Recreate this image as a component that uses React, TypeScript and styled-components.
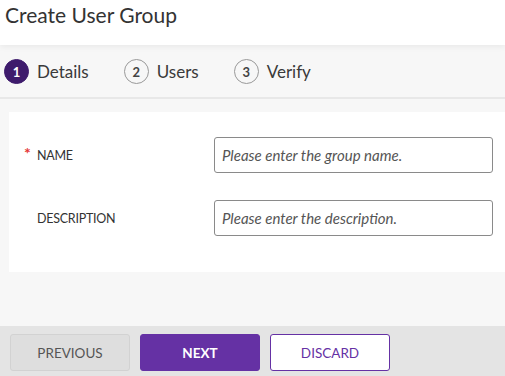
import React from "react";
import styled, {createGlobalStyle} from "styled-components";

const GlobalStyle = createGlobalStyle`
  html, body {
    margin: 0;
    padding: 0;
    height: 100%;
    background: #f7f7f7;
    font-family: Lato, "Open Sans", sans-serif;
    color: #333;
  }
  #root {
    height: 100%;
  }
`;

const steps = ["Details", "Users", "Verify"];

const App = () => {
  const active = 0;
  return (
    <Page>
      <GlobalStyle />
      <Header>
        <Title>Create User Group</Title>
      </Header>
      <Stepper>
        {steps.map((label, i) => (
          <Step key={label}>
            <StepNumber $active={i === active}>{i + 1}</StepNumber>
            <StepLabel>{label}</StepLabel>
          </Step>
        ))}
      </Stepper>
      <Content>
        <Card>
          <FieldRow>
            <Label>
              <Required>*</Required>
              NAME
            </Label>
            <Input placeholder="Please enter the group name." />
          </FieldRow>
          <FieldRow>
            <Label>
              <Required />
              DESCRIPTION
            </Label>
            <Input placeholder="Please enter the description." />
          </FieldRow>
        </Card>
      </Content>
      <Footer>
        <Button $variant="disabled">PREVIOUS</Button>
        <Button $variant="primary">NEXT</Button>
        <Button $variant="outline">DISCARD</Button>
      </Footer>
    </Page>
  );
};

const Page = styled.div`
  display: flex;
  flex-direction: column;
  height: 100vh;
  overflow: hidden;
`;

const Header = styled.header`
  height: 45px;
  flex-shrink: 0;
  background: #ffffff;
  padding: 1px 0 0 5px;
  box-sizing: border-box;
  box-shadow: 0 2px 6px rgba(0, 0, 0, 0.06);
  position: relative;
  z-index: 1;
`;

const Title = styled.h1`
  margin: 0;
  font-size: 21px;
  font-weight: 400;
  line-height: 28px;
  color: #333;
`;

const Stepper = styled.nav`
  height: 54px;
  flex-shrink: 0;
  box-sizing: border-box;
  display: flex;
  align-items: center;
  gap: 35px;
  padding: 1px 0 0 4px;
  background: #f7f7f7;
  border-bottom: 2px solid #e8e8e8;
`;

const Step = styled.div`
  display: flex;
  align-items: center;
  gap: 8px;
`;

const StepNumber = styled.span<{$active: boolean}>`
  width: 25px;
  height: 25px;
  box-sizing: border-box;
  border-radius: 50%;
  display: flex;
  align-items: center;
  justify-content: center;
  font-size: 13px;
  font-weight: 700;
  background: ${(p) => (p.$active ? "#3e1b6c" : "transparent")};
  color: ${(p) => (p.$active ? "#ffffff" : "#444")};
  border: 1px solid ${(p) => (p.$active ? "#3e1b6c" : "#999")};
`;

const StepLabel = styled.span`
  font-size: 17px;
  color: #3a3a3a;
`;

const Content = styled.main`
  flex: 1;
  padding: 13px 0 0 9px;
`;

const Card = styled.section`
  background: #ffffff;
  height: 160px;
  box-sizing: border-box;
  padding: 25px 12px 0 15px;
  display: flex;
  flex-direction: column;
  gap: 27px;
`;

const FieldRow = styled.div`
  display: grid;
  grid-template-columns: 190px 1fr;
  align-items: center;
`;

const Label = styled.label`
  display: flex;
  align-items: center;
  font-size: 12.5px;
  color: #333;
  letter-spacing: -0.25px;
`;

const Required = styled.span`
  width: 13px;
  color: #e53935;
  font-size: 16px;
  font-weight: 700;
  line-height: 1;
  position: relative;
  top: -2px;
`;

const Input = styled.input`
  height: 36px;
  box-sizing: border-box;
  border: 1px solid #8a8a8a;
  border-radius: 3px;
  padding: 0 7px;
  font-family: Lato, "Open Sans", sans-serif;
  font-size: 15px;
  background: #fff;
  &::placeholder {
    font-style: italic;
    color: #555;
  }
`;

const Footer = styled.footer`
  height: 50px;
  flex-shrink: 0;
  background: #e4e4e4;
  display: flex;
  align-items: center;
  gap: 10px;
  padding: 0 0 0 10px;
`;

const variants = {
  disabled: {bg: "#dedede", border: "#d2d2d2", color: "#555"},
  primary: {bg: "#6531a4", border: "#6531a4", color: "#ffffff"},
  outline: {bg: "#ffffff", border: "#6531a4", color: "#6531a4"},
};

const Button = styled.button<{$variant: keyof typeof variants}>`
  width: 120px;
  height: 37px;
  margin-top: 3px;
  border-radius: 3px;
  font-family: Lato, "Open Sans", sans-serif;
  font-size: 13.5px;
  font-weight: ${(p) => (p.$variant === "primary" ? 700 : 400)};
  background: ${(p) => variants[p.$variant].bg};
  border: 1px solid ${(p) => variants[p.$variant].border};
  color: ${(p) => variants[p.$variant].color};
  cursor: pointer;
`;

export default App;
